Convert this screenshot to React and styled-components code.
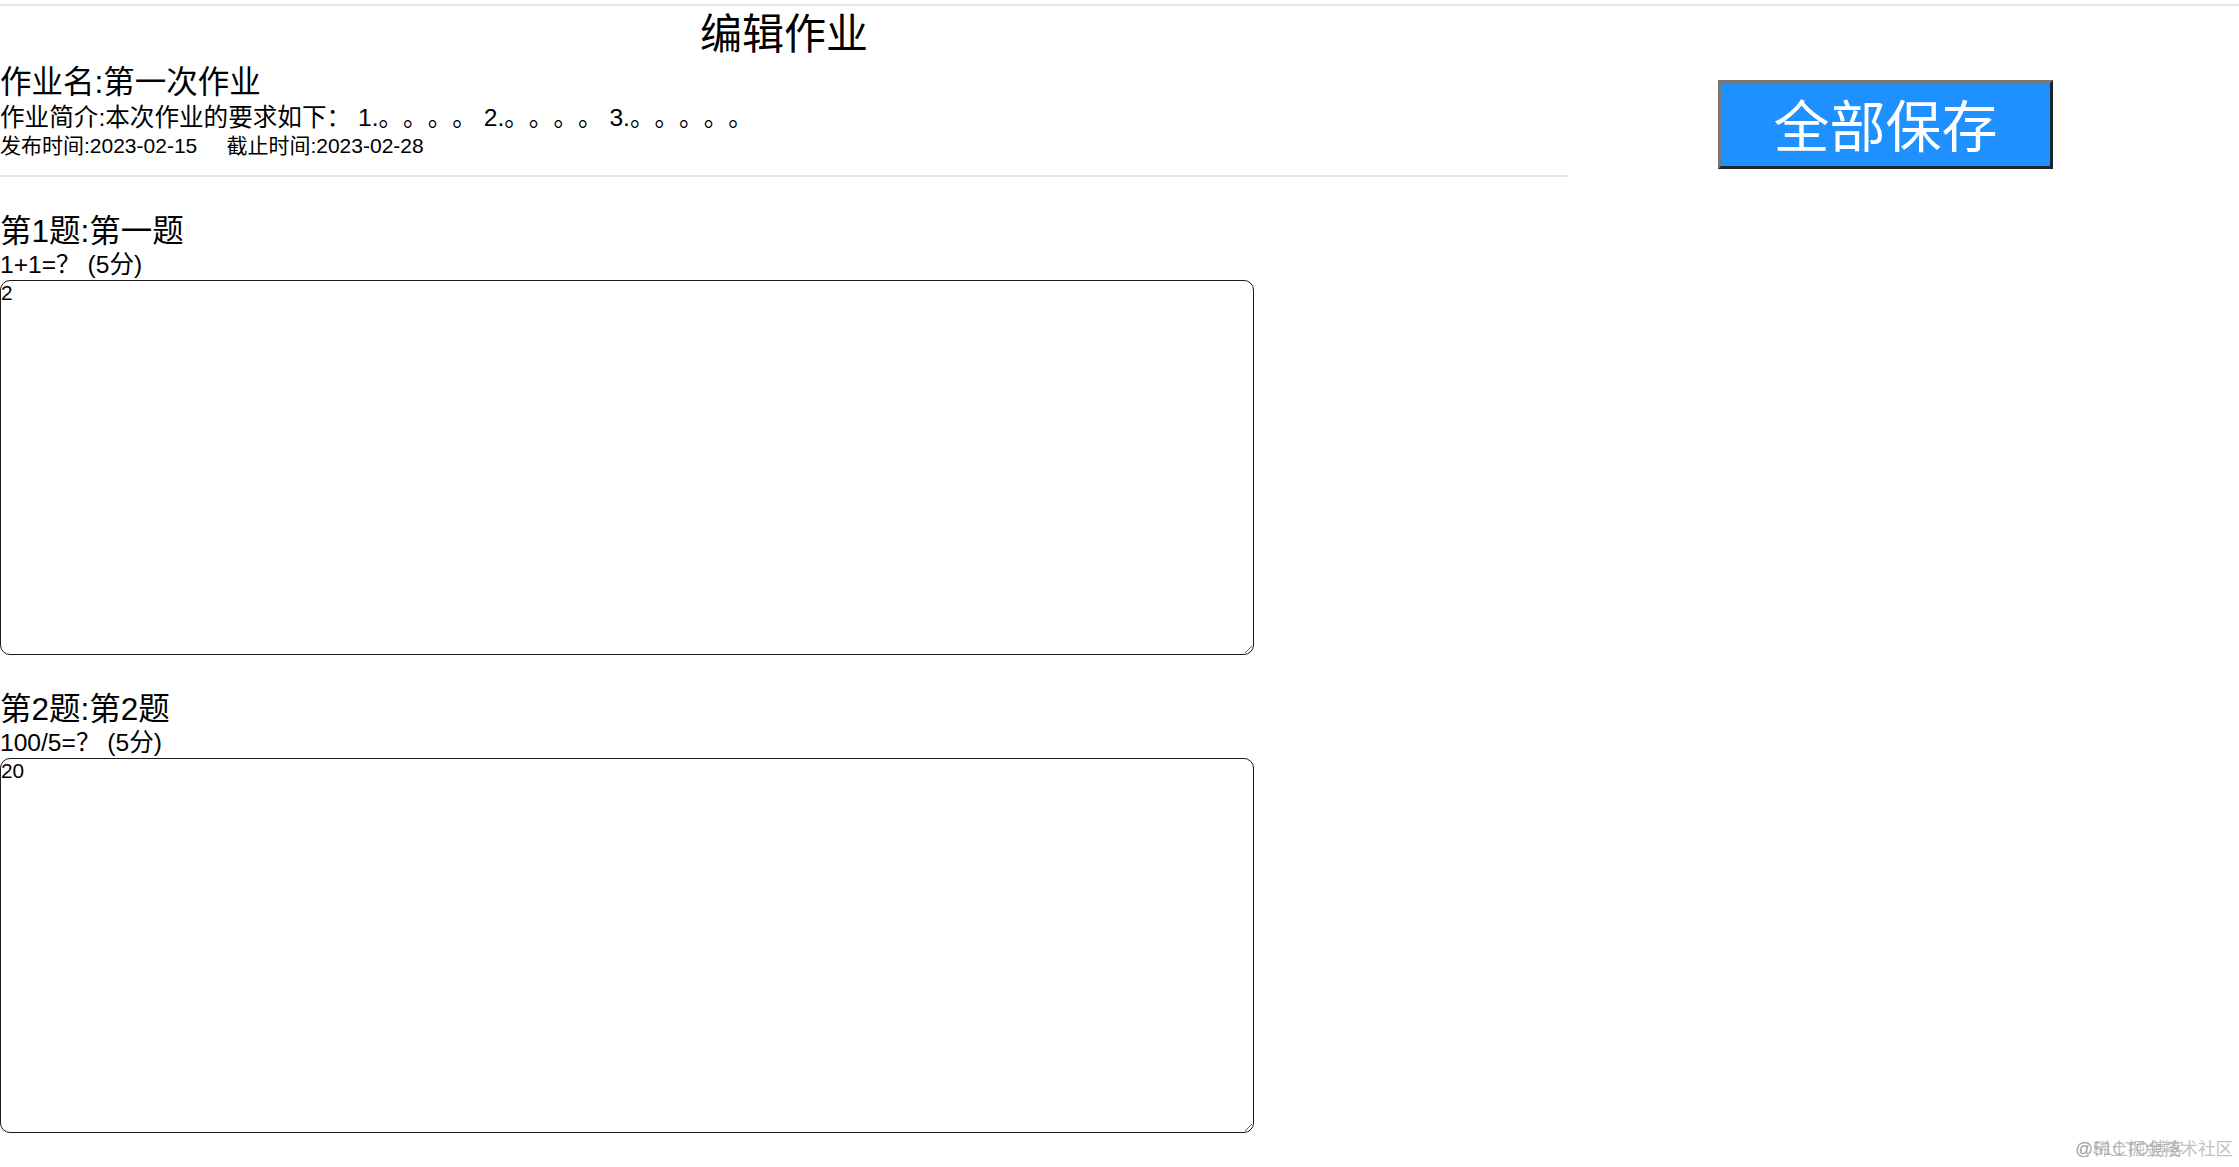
import React, { useEffect, useRef } from "react";
import styled, { createGlobalStyle } from "styled-components";

const GlobalStyle = createGlobalStyle`
  html, body {
    margin: 0;
    padding: 0;
    background: #ffffff;
  }
  body {
    font-family: "Liberation Sans", "Noto Sans CJK SC", sans-serif;
    color: #000000;
    text-spacing-trim: space-all;
  }
`;

const Page = styled.div`
  position: relative;
  min-height: 100vh;
  overflow: hidden;
`;

const TopRule = styled.div`
  margin-top: 4px;
  height: 2px;
  background: #e4e4e4;
`;

const Layout = styled.div`
  display: flex;
  align-items: flex-start;
`;

const MainColumn = styled.main`
  width: 1568px;
  flex: none;
`;

const SideColumn = styled.aside`
  flex: 1;
  padding-top: 74px;
  padding-left: 150px;
`;

const PageTitle = styled.h1`
  margin: 4.2px 0 0;
  font-size: 42px;
  font-weight: 400;
  line-height: 50.5px;
  text-align: center;
`;

const InfoLine = styled.div`
  font-size: ${(p) => p.$size}px;
  line-height: ${(p) => p.$lh}px;
  white-space: pre;
  text-spacing-trim: space-all;
`;

const Divider = styled.div`
  margin-top: 15px;
  height: 2px;
  background: #e6e6e6;
`;

const QuestionBlock = styled.section`
  margin-top: 34px;
`;

const QuestionTitle = styled.h2`
  margin: 0;
  font-size: 31.5px;
  font-weight: 400;
  line-height: 40px;
`;

const QuestionDesc = styled.div`
  font-size: 24.6px;
  line-height: 28.8px;
  white-space: pre;
  text-spacing-trim: space-all;
`;

const AnswerBox = styled.textarea`
  display: block;
  box-sizing: border-box;
  width: 1254px;
  height: 375px;
  margin: 0;
  padding: 0;
  border: 1px solid #1a1a1a;
  border-radius: 10px;
  font-family: "Liberation Sans", "Noto Sans CJK SC", sans-serif;
  font-size: 20.8px;
  color: #000;
  background: #fff;
  outline: none;
  resize: both;
  caret-color: #000;
`;

const SaveButton = styled.button`
  display: block;
  box-sizing: border-box;
  width: 335px;
  height: 89px;
  padding: 6px 0 0;
  background: #1e90ff;
  color: #ffffff;
  font-family: "Liberation Sans", "Noto Sans CJK SC", sans-serif;
  font-size: 56px;
  line-height: 1;
  border-style: solid;
  border-width: 3px;
  border-color: #787878 #1e262c #1e262c #787878;
  cursor: pointer;
`;

const Watermark = styled.div`
  position: absolute;
  right: 6px;
  bottom: 8px;
  display: grid;
  font-size: 17.5px;
  line-height: 20px;
  color: rgba(140, 140, 140, 0.55);
  pointer-events: none;
`;

const WatermarkLayer = styled.span`
  grid-area: 1 / 1;
  white-space: nowrap;
`;

const questions = [
  { no: 1, name: "第一题", text: "1+1=？ (5分)", answer: "2" },
  { no: 2, name: "第2题", text: "100/5=？ (5分)", answer: "20" },
];

export default function App() {
  const lastRef = useRef(null);

  useEffect(() => {
    const el = lastRef.current;
    if (el) {
      el.focus();
      const len = el.value.length;
      el.setSelectionRange(len, len);
    }
  }, []);

  return (
    <Page>
      <GlobalStyle />
      <TopRule />
      <Layout>
        <MainColumn>
          <PageTitle>编辑作业</PageTitle>
          <InfoLine $size={31.5} $lh={42.8}>作业名:第一次作业</InfoLine>
          <InfoLine $size={24.6} $lh={30}>
            作业简介:本次作业的要求如下： 1.。。。。 2.。。。。 3.。。。。。
          </InfoLine>
          <InfoLine $size={21} $lh={26.5}>
            {"发布时间:2023-02-15\u00a0\u00a0\u00a0\u00a0\u00a0截止时间:2023-02-28"}
          </InfoLine>
          <Divider />
          {questions.map((q, i) => (
            <QuestionBlock key={q.no}>
              <QuestionTitle>
                第{q.no}题:{q.name}
              </QuestionTitle>
              <QuestionDesc>{q.text}</QuestionDesc>
              <AnswerBox
                defaultValue={q.answer}
                ref={i === questions.length - 1 ? lastRef : undefined}
              />
            </QuestionBlock>
          ))}
        </MainColumn>
        <SideColumn>
          <SaveButton type="button">全部保存</SaveButton>
        </SideColumn>
      </Layout>
      <Watermark>
        <WatermarkLayer>@稀土掘金技术社区</WatermarkLayer>
        <WatermarkLayer>@51CTO博客</WatermarkLayer>
      </Watermark>
    </Page>
  );
}
